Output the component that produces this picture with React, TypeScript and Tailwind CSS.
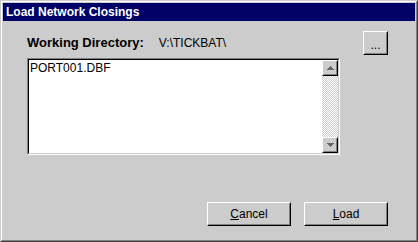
function Raised({ className, children }: { className: string; children?: React.ReactNode }) {
  return (
    <div className={`border border-t-white border-l-white border-r-black border-b-black ${className}`}>
      <div className="flex h-full w-full items-center justify-center border border-t-[#cccccc] border-l-[#cccccc] border-r-[#808080] border-b-[#808080] bg-[#cccccc]">
        {children}
      </div>
    </div>
  );
}

function Arrow({ up }: { up?: boolean }) {
  return (
    <svg width="7" height="4" viewBox="0 0 7 4" shapeRendering="crispEdges">
      {up ? (
        <path d="M3 0h1v1h1v1h1v1h1v1H0V3h1V2h1V1h1z" fill="#666666" />
      ) : (
        <path d="M0 0h7v1H6v1H5v1H4v1H3V3H2V2H1V1H0z" fill="#666666" />
      )}
    </svg>
  );
}

export default function App() {
  return (
    <div className="h-[242px] w-[418px] bg-[#cccccc] font-['Liberation_Sans',Arial,sans-serif] text-[12px] text-black">
      <div className="flex h-full w-full flex-col border border-t-[#cccccc] border-l-[#cccccc] border-r-[#404040] border-b-[#404040]">
        <div className="flex h-full w-full flex-col border border-t-white border-l-white border-r-[#808080] border-b-[#808080] p-px">
          <div className="flex h-[18px] items-center bg-[#000066] pl-[3px] text-[12px] font-bold text-white">
            Load Network Closings
          </div>

          <div className="mt-[10px] flex items-center pl-[24px] pr-[27px]">
            <span className="text-[13px] font-bold">Working Directory:</span>
            <span className="ml-[15px]">V:\TICKBAT\</span>
            <Raised className="ml-auto h-[24px] w-[25px]">
              <span className="mt-[4px] leading-none">...</span>
            </Raised>
          </div>

          <div className="mt-[3px] ml-[24px] h-[97px] w-[313px] border border-t-[#808080] border-l-[#808080] border-r-white border-b-white">
            <div className="flex h-full w-full border border-t-black border-l-black border-r-[#cccccc] border-b-[#cccccc] bg-white">
              <div className="flex-1 pl-[1px] pt-[1px] leading-[14px]">PORT001.DBF</div>
              <div className="flex w-[16px] flex-col">
                <Raised className="h-[16px] w-[16px]">
                  <Arrow up />
                </Raised>
                <div className="flex-1 bg-[image:repeating-conic-gradient(#cccccc_0%_25%,#ffffff_0%_50%)] bg-[length:2px_2px]" />
                <Raised className="h-[16px] w-[16px]">
                  <Arrow />
                </Raised>
              </div>
            </div>
          </div>

          <div className="mt-[47px] flex justify-end gap-[13px] pr-[27px]">
            <Raised className="h-[24px] w-[84px]">
              <span>
                <span className="underline">C</span>ancel
              </span>
            </Raised>
            <Raised className="h-[24px] w-[84px]">
              <span>
                <span className="underline">L</span>oad
              </span>
            </Raised>
          </div>
        </div>
      </div>
    </div>
  );
}
